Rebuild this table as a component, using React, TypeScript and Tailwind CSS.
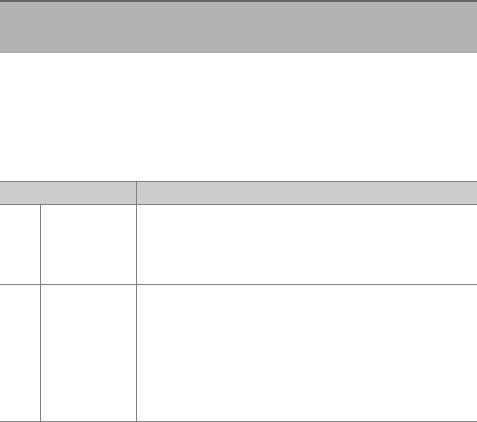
export default function App() {
  return (
    <div className="w-[477px] h-[422px] bg-white overflow-hidden" style={{ fontFamily: '"Liberation Sans", Arial, sans-serif' }}>
      <div className="h-[53px] border-t-2 border-[#666666] bg-[#b3b3b3]" />
      <div className="mt-[128px] border-t border-[#808080]">
        <div className="flex h-[23px] border-b border-[#808080] bg-[#cccccc]">
          <div className="w-[137px] border-r border-[#808080]" />
          <div className="flex-1" />
        </div>
        <div className="flex h-[80px] border-b border-[#808080]">
          <div className="w-[41px] border-r border-[#808080]" />
          <div className="w-[96px] border-r border-[#808080]" />
          <div className="flex-1" />
        </div>
        <div className="flex h-[137px] border-b border-[#808080]">
          <div className="w-[41px] border-r border-[#808080]" />
          <div className="w-[96px] border-r border-[#808080]" />
          <div className="flex-1" />
        </div>
      </div>
    </div>
  );
}
